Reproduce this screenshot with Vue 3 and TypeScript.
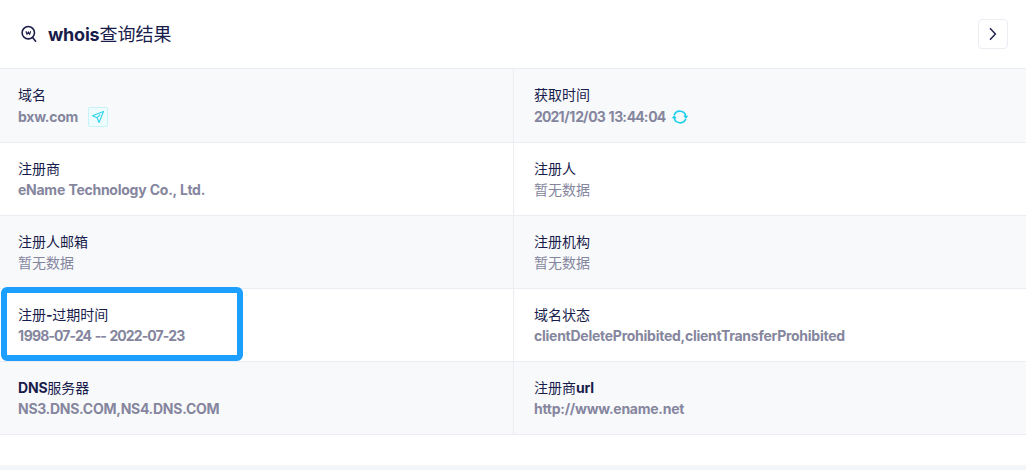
<script setup lang="ts">
interface Cell { label: string; value: string; icon?: 'send' | 'sync'; }
const cells: Cell[] = [
  { label: '域名', value: 'bxw.com', icon: 'send' },
  { label: '获取时间', value: '2021/12/03 13:44:04', icon: 'sync' },
  { label: '注册商', value: 'eName Technology Co., Ltd.' },
  { label: '注册人', value: '暂无数据' },
  { label: '注册人邮箱', value: '暂无数据' },
  { label: '注册机构', value: '暂无数据' },
  { label: '注册-过期时间', value: '1998-07-24 -- 2022-07-23' },
  { label: '域名状态', value: 'clientDeleteProhibited,clientTransferProhibited' },
  { label: 'DNS服务器', value: 'NS3.DNS.COM,NS4.DNS.COM' },
  { label: '注册商url', value: 'http://www.ename.net' },
];
const rows = [0, 2, 4, 6, 8].map((i) => cells.slice(i, i + 2));
// Latin runs are bold, CJK runs stay regular weight; digits other than 1 set tighter.
const runs = (text: string) =>
  text
    .split(/([^\x00-\x7f]+|[02-9-]+)/)
    .filter(Boolean)
    .map((t) => ({ t, cjk: /^[^\x00-\x7f]/.test(t), num: /^[02-9-]/.test(t) }));
</script>

<template>
  <main class="page">
    <header class="head">
      <div class="title-wrap">
        <svg class="logo" width="20" height="20" viewBox="0 0 20 20" fill="none">
          <circle cx="10.3" cy="8.7" r="6.2" stroke="#1c1f4a" stroke-width="1.6" />
          <path d="M14.6 13.4l3 3.8" stroke="#1c1f4a" stroke-width="1.6" stroke-linecap="round" />
          <path d="M7.9 7.2l1.1 3 1.3-2.2 1.3 2.2 1.1-3" stroke="#1c1f4a" stroke-width="1.1" />
        </svg>
        <h1 class="title"><span v-for="(p, i) in runs('whois查询结果')" :key="i" :class="{ cjk: p.cjk }">{{ p.t }}</span></h1>
      </div>
      <button class="next" type="button" aria-label="next">
        <svg width="10" height="14" viewBox="0 0 10 14" fill="none">
          <path d="M2 1.2L7.4 7 2 12.8" stroke="#1c1f4a" stroke-width="1.4" />
        </svg>
      </button>
    </header>
    <section class="table">
      <div v-for="(row, r) in rows" :key="r" class="row" :class="{ alt: r % 2 === 0 }">
        <div v-for="c in row" :key="c.label" class="cell">
          <div class="label"><span v-for="(p, i) in runs(c.label)" :key="i" :class="{ cjk: p.cjk }">{{ p.t }}</span></div>
          <div class="value" :class="{ 'has-icon': c.icon }">
            <span><span v-for="(p, i) in runs(c.value)" :key="i" :class="{ cjk: p.cjk, num: p.num }">{{ p.t }}</span></span>
            <span v-if="c.icon === 'send'" class="send">
              <svg width="14" height="14" viewBox="0 0 14 14" fill="none">
                <path d="M12.5 1.5L1.5 5.8l4.6 1.9 2 4.8 4.4-11zM6.1 7.7l3.2-3" stroke="#2fd3ea" stroke-width="1.1" stroke-linejoin="round" />
              </svg>
            </span>
            <svg v-if="c.icon === 'sync'" class="sync" width="16" height="16" viewBox="0 0 16 16" fill="none">
              <path d="M2.2 6.2A6 6 0 0 1 13.8 7.5" stroke="#20cfee" stroke-width="1.7" />
              <path d="M13.8 9.8A6 6 0 0 1 2.2 8.5" stroke="#20cfee" stroke-width="1.7" />
              <path d="M11.2 6.8h5.2l-2.6 3zM4.8 9.2H-.4l2.6-3z" fill="#20cfee" />
            </svg>
          </div>
        </div>
      </div>
      <div class="highlight" aria-hidden="true"></div>
    </section>
    <div class="foot"></div>
  </main>
</template>

<style>
html, body { margin: 0; background: #fff; }
</style>

<style scoped>
.page {
  width: 1026px;
  height: 470px;
  overflow: hidden;
  display: flex;
  flex-direction: column;
  font-family: Inter, "Noto Sans CJK SC", sans-serif;
  font-variant-numeric: proportional-nums;
  background: #fff;
}
.head {
  box-sizing: border-box;
  display: flex;
  align-items: center;
  justify-content: space-between;
  padding: 0 18px;
  border-bottom: 1px solid #ebedf3;
  flex: none;
  height: 69px;
}
.title-wrap { display: flex; align-items: center; gap: 10px; }
.title {
  margin: 2px 0 0;
  font-size: 18px;
  line-height: 24px;
  font-weight: 700;
  letter-spacing: -0.2px;
  color: #181c4b;
}
.cjk { font-weight: 400; letter-spacing: 0; }
.num { letter-spacing: -0.9px; }
.next {
  width: 30px;
  height: 30px;
  padding: 0;
  display: flex;
  align-items: center;
  justify-content: center;
  background: #fff;
  border: 1px solid #ebedf3;
  border-radius: 4px;
}
.table { position: relative; }
.row {
  display: grid;
  grid-template-columns: 514px 512px;
  box-sizing: border-box;
  border-bottom: 1px solid #ebedf3;
}
.alt { background: #f8f9fb; }
.cell {
  padding: 16px 18px 15px;
  box-sizing: border-box;
}
.cell:first-child { border-right: 1px solid #ebedf3; }
.cell:last-child { padding-left: 20px; }
.label {
  font-size: 14px;
  line-height: 20px;
  font-weight: 700;
  letter-spacing: -0.2px;
  color: #181c4b;
}
.value {
  display: flex;
  align-items: flex-end;
  gap: 7px;
  min-height: 21px;
  font-size: 14px;
  line-height: 20px;
  font-weight: 700;
  letter-spacing: -0.26px;
  word-spacing: 0.4px;
  color: #85869e;
}
.has-icon { min-height: 22px; }
.send {
  width: 20px;
  height: 20px;
  margin-left: 3px;
  box-sizing: border-box;
  display: flex;
  align-items: center;
  justify-content: center;
  background: #eefcfd;
  border: 1px solid #c5f3f8;
  border-radius: 2px;
}
.sync { margin-bottom: 2px; overflow: visible; }
.highlight {
  position: absolute;
  left: 1px;
  top: 218px;
  width: 242px;
  height: 74px;
  box-sizing: border-box;
  border: 6px solid #1c9fff;
  border-radius: 6px;
}
.foot {
  margin-top: auto;
  height: 5px;
  background: #f3f6f9;
}
</style>
